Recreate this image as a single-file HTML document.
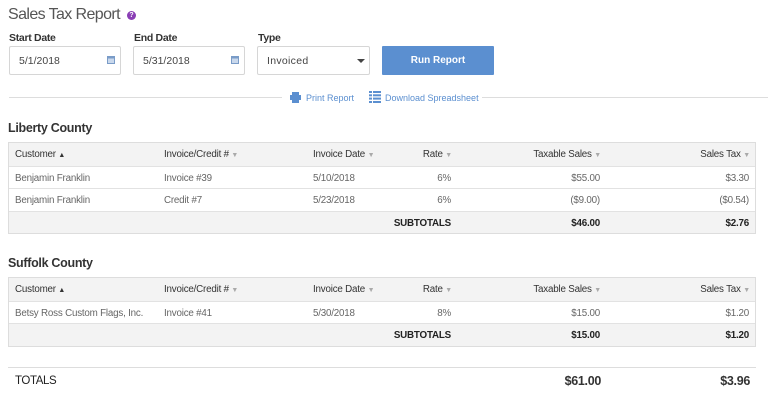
<!DOCTYPE html>
<html><head><meta charset="utf-8"><style>
*{margin:0;padding:0;box-sizing:border-box}
body{width:768px;height:401px;background:#fff;font-family:"Liberation Sans",sans-serif;color:#444;position:relative;overflow:hidden}
.a{position:absolute;white-space:nowrap}
.lbl{font-size:10.5px;font-weight:bold;color:#333;letter-spacing:-0.3px}
.inp{position:absolute;top:46px;height:29px;border:1px solid #d6d6d6;border-radius:2px;font-size:10.5px;color:#444;padding:8px 0 0 9px}
.tbl{position:absolute;left:8px;width:748px;border:1px solid #ddd}
.row{position:relative;height:22.5px;border-top:1px solid #e2e2e2;font-size:9.8px;color:#666;letter-spacing:-0.2px}
.row:first-child{border-top:none}
.hd{background:#f3f3f3;color:#333}
.st{background:#f3f3f3;color:#222;font-weight:bold}
.row span{position:absolute;top:6px}
.ar{color:#aaa;font-size:7px}
h2{position:absolute;font-size:12.5px;font-weight:bold;color:#333;letter-spacing:-0.3px}
</style></head><body>
<div class="a" style="left:8px;top:6px;font-size:16px;color:#555;letter-spacing:-0.6px">Sales Tax Report</div>
<div class="a" style="left:127px;top:11px;width:9px;height:9px;border-radius:50%;background:#8a3fb5;color:#fff;font-size:7px;font-weight:bold;text-align:center;line-height:9px">?</div>
<div class="a lbl" style="left:9px;top:32px">Start Date</div>
<div class="a lbl" style="left:134px;top:32px">End Date</div>
<div class="a lbl" style="left:258px;top:32px">Type</div>
<div class="inp" style="left:9px;width:112px">5/1/2018</div>
<div class="inp" style="left:133px;width:112px">5/31/2018</div>
<div class="inp" style="left:257px;width:113px;letter-spacing:0.3px">Invoiced</div>
<svg class="a" style="left:107px;top:55px" width="8" height="9"><rect x="0" y="1" width="8" height="8" fill="#7a9cc8"/><rect x="1" y="3.5" width="6" height="4.5" fill="#c9d8ec"/></svg>
<svg class="a" style="left:231px;top:55px" width="8" height="9"><rect x="0" y="1" width="8" height="8" fill="#7a9cc8"/><rect x="1" y="3.5" width="6" height="4.5" fill="#c9d8ec"/></svg>
<svg class="a" style="left:357px;top:59px" width="8" height="5"><path d="M0 0H8L4 4Z" fill="#444"/></svg>
<div class="a" style="left:382px;top:46px;width:112px;height:29px;background:#5b8fd0;color:#fff;font-size:10px;font-weight:bold;text-align:center;line-height:29px;border-radius:1px">Run Report</div>
<div class="a" style="left:9px;top:97px;width:273px;border-top:1px solid #ddd"></div>
<div class="a" style="left:482px;top:97px;width:286px;border-top:1px solid #ddd"></div>
<svg class="a" style="left:290px;top:92px" width="11" height="11"><rect x="2" y="0" width="7" height="3" fill="#5b8fd0"/><rect x="0" y="3" width="11" height="5" fill="#5b8fd0"/><rect x="2" y="7" width="7" height="4" fill="#5b8fd0"/></svg>
<div class="a" style="left:306px;top:93px;font-size:9px;color:#5b8fd0">Print Report</div>
<svg class="a" style="left:369px;top:91px" width="12" height="12"><g fill="#5b8fd0"><rect x="0" y="0" width="3" height="2"/><rect x="4" y="0" width="8" height="2"/><rect x="0" y="3.3" width="3" height="2"/><rect x="4" y="3.3" width="8" height="2"/><rect x="0" y="6.6" width="3" height="2"/><rect x="4" y="6.6" width="8" height="2"/><rect x="0" y="10" width="3" height="2"/><rect x="4" y="10" width="8" height="2"/></g></svg>
<div class="a" style="left:385px;top:93px;font-size:9px;color:#5b8fd0">Download Spreadsheet</div>

<h2 style="left:8px;top:121px">Liberty County</h2>
<div class="tbl" style="top:142px">
<div class="row hd"><span style="left:6px">Customer <span class="ar" style="position:static;color:#333">▲</span></span><span style="left:155px">Invoice/Credit # <span class="ar" style="position:static">▼</span></span><span style="left:304px">Invoice Date <span class="ar" style="position:static">▼</span></span><span style="right:303px">Rate <span class="ar" style="position:static">▼</span></span><span style="right:154px">Taxable Sales <span class="ar" style="position:static">▼</span></span><span style="right:5px">Sales Tax <span class="ar" style="position:static">▼</span></span></div>
<div class="row"><span style="left:6px">Benjamin Franklin</span><span style="left:155px">Invoice #39</span><span style="left:304px">5/10/2018</span><span style="right:304px">6%</span><span style="right:155px">$55.00</span><span style="right:6px">$3.30</span></div>
<div class="row"><span style="left:6px">Benjamin Franklin</span><span style="left:155px">Credit #7</span><span style="left:304px">5/23/2018</span><span style="right:304px">6%</span><span style="right:155px">($9.00)</span><span style="right:6px">($0.54)</span></div>
<div class="row st"><span style="right:304px">SUBTOTALS</span><span style="right:155px">$46.00</span><span style="right:6px">$2.76</span></div>
</div>

<h2 style="left:8px;top:256px">Suffolk County</h2>
<div class="tbl" style="top:277px">
<div class="row hd"><span style="left:6px">Customer <span class="ar" style="position:static;color:#333">▲</span></span><span style="left:155px">Invoice/Credit # <span class="ar" style="position:static">▼</span></span><span style="left:304px">Invoice Date <span class="ar" style="position:static">▼</span></span><span style="right:303px">Rate <span class="ar" style="position:static">▼</span></span><span style="right:154px">Taxable Sales <span class="ar" style="position:static">▼</span></span><span style="right:5px">Sales Tax <span class="ar" style="position:static">▼</span></span></div>
<div class="row"><span style="left:6px">Betsy Ross Custom Flags, Inc.</span><span style="left:155px">Invoice #41</span><span style="left:304px">5/30/2018</span><span style="right:304px">8%</span><span style="right:155px">$15.00</span><span style="right:6px">$1.20</span></div>
<div class="row st"><span style="right:304px">SUBTOTALS</span><span style="right:155px">$15.00</span><span style="right:6px">$1.20</span></div>
</div>

<div class="a" style="left:8px;top:367px;width:748px;border-top:1.5px solid #ddd"></div>
<div class="a" style="left:15px;top:375px;font-size:11.5px;color:#222;letter-spacing:-0.4px">TOTALS</div>
<div class="a" style="right:167px;top:374px;font-size:12.5px;font-weight:bold;color:#333;letter-spacing:-0.3px">$61.00</div>
<div class="a" style="right:18px;top:374px;font-size:12.5px;font-weight:bold;color:#333;letter-spacing:-0.3px">$3.96</div>
</body></html>
